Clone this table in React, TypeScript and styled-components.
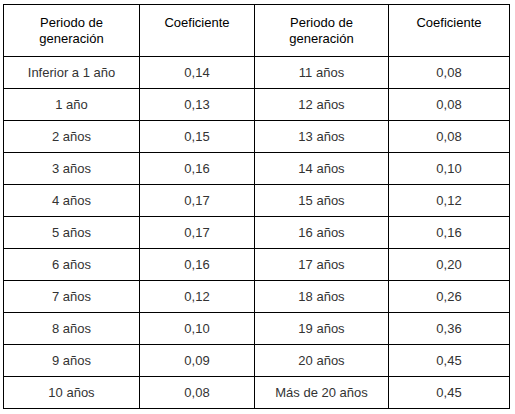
import styled, { createGlobalStyle } from 'styled-components';

const GlobalStyle = createGlobalStyle`
    html, body {
        margin: 0;
        padding: 0;
        background: #ffffff;
    }
    body {
        font-family: "Liberation Sans", Arial, sans-serif;
    }
`;

const rows: Array<[string, string, string, string]> = [
    ['Inferior a 1 año', '0,14', '11 años', '0,08'],
    ['1 año', '0,13', '12 años', '0,08'],
    ['2 años', '0,15', '13 años', '0,08'],
    ['3 años', '0,16', '14 años', '0,10'],
    ['4 años', '0,17', '15 años', '0,12'],
    ['5 años', '0,17', '16 años', '0,16'],
    ['6 años', '0,16', '17 años', '0,20'],
    ['7 años', '0,12', '18 años', '0,26'],
    ['8 años', '0,10', '19 años', '0,36'],
    ['9 años', '0,09', '20 años', '0,45'],
    ['10 años', '0,08', 'Más de 20 años', '0,45'],
];

const columnWidths = [136, 115, 134, 121];

const App: React.FC = () => (
    <Page>
        <GlobalStyle />
        <Table>
            <colgroup>
                { columnWidths.map((w, i) => <col key={i} style={{ width: w }} />) }
            </colgroup>
            <thead>
                <tr>
                    <HeadCell>Periodo de<br />generación</HeadCell>
                    <HeadCell>Coeficiente</HeadCell>
                    <HeadCell>Periodo de<br />generación</HeadCell>
                    <HeadCell>Coeficiente</HeadCell>
                </tr>
            </thead>
            <tbody>
                { rows.map((row) => (
                    <tr key={row[0]}>
                        { row.map((value, i) => <Cell key={i}>{ value }</Cell>) }
                    </tr>
                )) }
            </tbody>
        </Table>
    </Page>
);

const Page = styled.div`
    padding: 4px 0 0 3px;
`;

const Table = styled.table`
    border-collapse: collapse;
    table-layout: fixed;
    width: 507px;
    border: 1px solid #000;
`;

const HeadCell = styled.th`
    height: 52px;
    box-sizing: border-box;
    padding: 10px 4px 0;
    vertical-align: top;
    border: 1px solid #000;

    color: #000;
    font-size: 13px;
    font-weight: normal;
    line-height: 16px;
    text-align: center;
`;

const Cell = styled.td`
    height: 32px;
    box-sizing: border-box;
    padding: 0 4px;
    vertical-align: middle;
    border: 1px solid #000;

    color: #333;
    font-size: 13px;
    line-height: 16px;
    text-align: center;
`;

App.displayName = 'App';
export default App;
